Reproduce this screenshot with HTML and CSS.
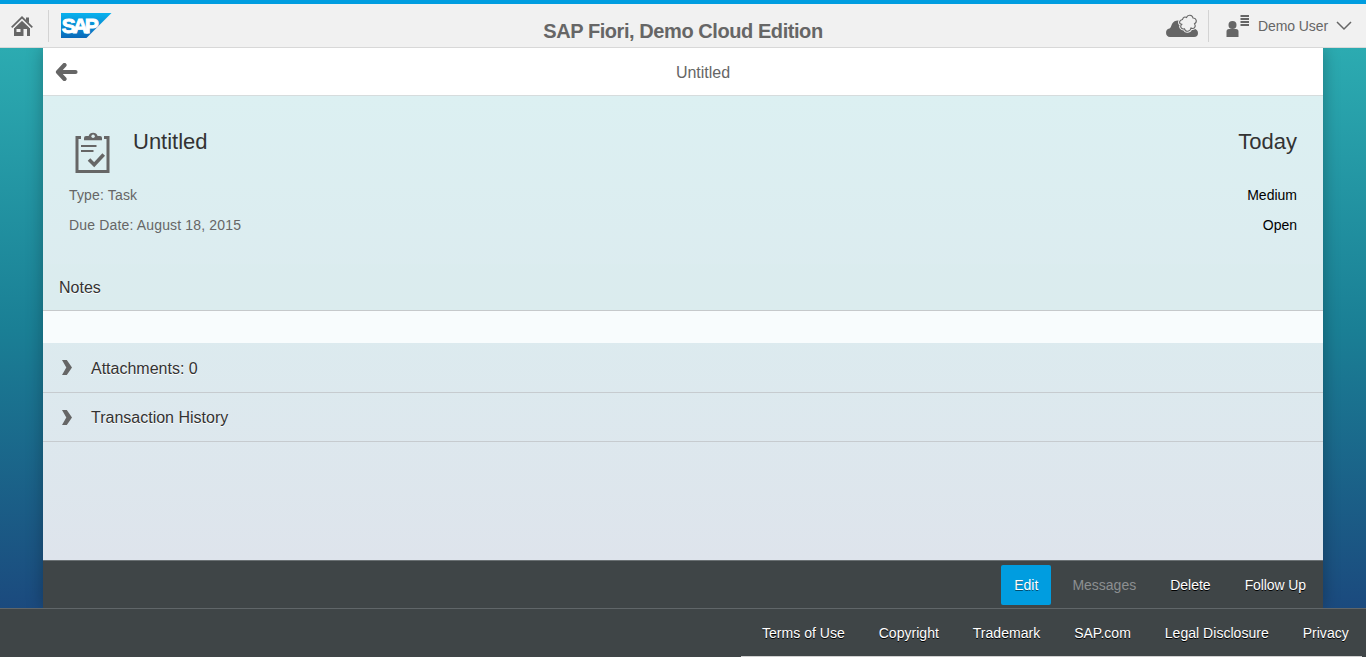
FILE: index.html
```html
<!DOCTYPE html>
<html lang="en">
<head>
<meta charset="utf-8">
<title>SAP Fiori, Demo Cloud Edition</title>
<link rel="stylesheet" href="styles.css">
</head>
<body>
<div class="shell">
  <header class="shell-header">
    <div class="header-start">
      <a class="home">
        <svg width="22" height="21" viewBox="0 0 22 21"><path fill="#666" d="M3 11.500 11 4.500l8 7V20H3zM15 1.500h3V7l-3-2.500z"/><path fill="none" stroke="#f1f1f1" stroke-width="1" d="m2 13 9-8.700 9 8.700"/><path fill="none" stroke="#666" stroke-width="1.700" d="m.7 11.300 10.300-10 10.300 10"/><path fill="#f1f1f1" d="M5.500 13h4v3h-4zM12.500 13H16v7h-3.500z"/></svg>
      </a>
      <svg class="logo" width="51" height="25" viewBox="0 0 51 25">
        <defs><linearGradient id="sap" x2="0" y2="1"><stop offset="0" stop-color="#08b2ee"/><stop offset="1" stop-color="#0a68b8"/></linearGradient></defs>
        <path fill="url(#sap)" d="M0 0h50.500L25.500 25H0z"/>
        <text class="logo-text" x="0.800" y="20" textLength="37" lengthAdjust="spacing">SAP</text>
      </svg>
    </div>
    <h1 class="shell-title">SAP Fiori, Demo Cloud Edition</h1>
    <div class="header-end">
      <svg class="cloud" width="34" height="24" viewBox="0 0 34 24"><path fill="#666" d="M5 23a4.300 4.300 0 0 1-.5-8.500C6 14 6 12 7 10c1.500-3 5-4 8-3.200L27 15c3.500-.7 6 1 6 4a4 4 0 0 1-4 4z"/><path class="puff-gap" d="M17.500 5.500C18 3 20 2.500 21.500 3.500 22.500.3 27.500.5 28 4c3.500-.2 4.500 4.200 1.500 5.800 2 3-.5 5.700-3.500 4.200-.8 4-5.500 4.400-6.500.8-3.500.8-5-2.500-2.800-4.500C13.500 9.700 14 6 17.500 5.500z"/><path class="puff" d="M17.500 5.500C18 3 20 2.500 21.500 3.500 22.500.3 27.500.5 28 4c3.500-.2 4.500 4.200 1.500 5.800 2 3-.5 5.700-3.500 4.200-.8 4-5.500 4.400-6.500.8-3.500.8-5-2.500-2.800-4.500C13.500 9.700 14 6 17.500 5.500z"/></svg>
      <div class="user">
        <svg width="24" height="23" viewBox="0 0 24 23" fill="#666"><circle cx="6.500" cy="11" r="4"/><path d="M.5 23v-5.500q0-2.500 2.500-2.500h7q2.500 0 2.500 2.500V23zM14.500 1h8.500v2h-8.500zM14.500 4h8.500v2h-8.500zM14.500 7h8.500v2h-8.500zM14.500 10h8.500v2h-8.500z"/></svg>
        <span class="user-name">Demo User</span>
        <svg width="16" height="10" viewBox="0 0 16 10"><path d="m1 1 7 7 7-7" fill="none" stroke="#666" stroke-width="1.500"/></svg>
      </div>
    </div>
  </header>
  <main class="canvas">
    <section class="page">
      <header class="page-header">
        <svg class="back" width="23" height="18" viewBox="0 0 23 18"><path d="M9.500 2 3 9l6.500 7M3.500 9H20.500" fill="none" stroke="#666" stroke-width="4.200" stroke-linecap="round" stroke-linejoin="round"/></svg>
        <h2 class="page-title">Untitled</h2>
      </header>
      <div class="content">
        <div class="object">
          <div class="object-top">
            <svg class="task-icon" width="36" height="42" viewBox="0 0 36 42" fill="none" stroke="#666"><path stroke-width="3" d="M6 5.500H2v34h31v-34H29"/><path fill="#666" stroke="none" d="M9 8.300V6q0-2 2-2h2.600a4.800 4.800 0 0 1 9 0H25q2 0 2 2v2.300z"/><circle cx="18.100" cy="4.200" r="1.700" fill="#ddeff1" stroke="none"/><path stroke-width="2" d="M6 14h15.500M6 19h12.500"/><path stroke-width="3.600" d="m14 27.500 5.200 5.200L28.700 22.500"/></svg>
            <span class="object-title">Untitled</span>
            <span class="object-date">Today</span>
          </div>
          <div class="attribute"><span class="label">Type: Task</span><span class="status">Medium</span></div>
          <div class="attribute"><span class="label">Due Date: August 18, 2015</span><span class="status">Open</span></div>
        </div>
        <h3 class="notes-title">Notes</h3>
        <div class="notes-body"></div>
        <div class="panel"><svg width="10" height="15" viewBox="0 0 10 16" preserveAspectRatio="none"><path fill="#666" d="M0 0h4.800L10 8l-5.200 8H0l4.300-8z"/></svg><span class="panel-text">Attachments: 0</span></div>
        <div class="panel"><svg width="10" height="15" viewBox="0 0 10 16" preserveAspectRatio="none"><path fill="#666" d="M0 0h4.800L10 8l-5.200 8H0l4.300-8z"/></svg><span class="panel-text">Transaction History</span></div>
      </div>
      <footer class="toolbar">
        <button class="action primary">Edit</button>
        <button class="action disabled">Messages</button>
        <button class="action">Delete</button>
        <button class="action follow">Follow Up</button>
      </footer>
    </section>
  </main>
  <footer class="shell-footer">
    <nav class="links">
      <a>Terms of Use</a><a>Copyright</a><a>Trademark</a><a>SAP.com</a><a>Legal Disclosure</a><a>Privacy</a>
    </nav>
  </footer>
</div>
</body>
</html>
```
FILE: styles.css
```css
* { box-sizing: border-box; }
body { margin: 0; font: 14px/20px "Liberation Sans", Arial, sans-serif; color: #666; overflow: hidden; }
h1, h2, h3 { margin: 0; }
svg { display: block; flex: none; }
.shell { height: 657px; display: flex; flex-direction: column; background: linear-gradient(#2cabb1 48px, #1a7f95 330px, #1b4a7e 608px); }
.shell-header { height: 48px; flex: none; display: grid; grid-template-columns: 1fr auto 1fr; background: #f1f1f1; border-top: 4px solid #009de0; border-bottom: 1px solid #d8d8d8; }
.header-start, .header-end, .user { display: flex; align-items: center; }
.home { height: 32px; width: 49px; padding: 6px 0 0 11px; border-right: 1px solid #d3d3d3; }
.logo { margin-left: 12px; }
.logo-text { font: bold 21px "Liberation Sans", Arial, sans-serif; fill: #fff; stroke: #fff; stroke-width: .9px; }
.shell-title { font-size: 20px; letter-spacing: -.43px; line-height: 24px; padding-top: 15px; font-weight: bold; }
.header-end { justify-content: flex-end; }
.cloud { margin: 0 9px 0 0; }
.puff, .puff-gap { fill: #f1f1f1; stroke: #f1f1f1; stroke-width: 3px; }
.puff { stroke: #666; stroke-width: 1.1px; }
.user { height: 32px; border-left: 1px solid #d3d3d3; padding: 0 14px 0 17px; }
.user-name { margin: 0 8px; font-size: 14px; letter-spacing: -.08px; }
.canvas { flex: 1; display: flex; padding: 0 43px; overflow: hidden; }
.page { flex: 1; display: flex; flex-direction: column; box-shadow: 0 0 16px rgba(0,0,0,.28); }
.page-header { height: 48px; flex: none; display: grid; grid-template-columns: 1fr auto 1fr; align-items: center; background: #fff; border-bottom: 1px solid #d6dcdd; }
.back { margin: 1px 0 0 12px; }
.page-title { font-size: 16px; line-height: 20px; font-weight: normal; padding: 2px 0 0 40px; }
.content { flex: 1; background: linear-gradient(#dcf0f2, #dcebef 48%, #dee4ec); }
.object { height: 168px; padding: 32px 26px 0; }
.object-top { display: flex; height: 52px; color: #333; font-size: 22px; line-height: 28px; }
.task-icon { margin: 4px 0 0 6px; }
.object-title { margin-left: 22px; }
.object-date { margin-left: auto; }
.attribute { display: flex; justify-content: space-between; height: 30px; line-height: 30px; }
.label { letter-spacing: .16px; }
.status { color: #000; }
.notes-title { height: 47px; padding-left: 16px; border-bottom: 1px solid #c6c9cb; font-size: 16px; line-height: 47px; font-weight: normal; color: #333; background: rgba(218,237,238,.7); text-shadow: 0 1px 0 #fff; }
.notes-body { height: 32px; background: #f8fcfd; }
.panel { height: 49px; display: flex; align-items: center; gap: 19px; padding-left: 19px; border-bottom: 1px solid #c6cbcf; color: #333; font-size: 16px; text-shadow: 0 1px 0 #fff; }
.panel-text { padding-top: 2px; }
.notes-body + .panel { height: 50px; }
.toolbar { height: 48px; flex: none; display: flex; align-items: center; justify-content: flex-end; gap: 8px; padding-right: 4px; background: #3f4547; border-top: 1px solid #6a7073; }
.action { height: 40px; padding: 0 13px; border: 0; border-radius: 2px; background: none; color: #fff; font: inherit; text-shadow: 0 1px 0 #000; }
.primary { background: #009de0; text-shadow: 0 1px 0 rgba(0,0,0,.5); }
.disabled { color: #8c8f91; text-shadow: none; }
.follow { letter-spacing: -.1px; }
.shell-footer { height: 49px; flex: none; display: flex; justify-content: flex-end; padding-right: 4px; background: #3f4547; border-top: 1px solid #606669; }
.links { display: flex; gap: 33.9px; width: 621px; padding: 14px 0 0 21px; border-bottom: 1px solid #d0d0d0; color: #fff; white-space: nowrap; letter-spacing: .03px; text-shadow: 0 1px 0 #000; }
```
